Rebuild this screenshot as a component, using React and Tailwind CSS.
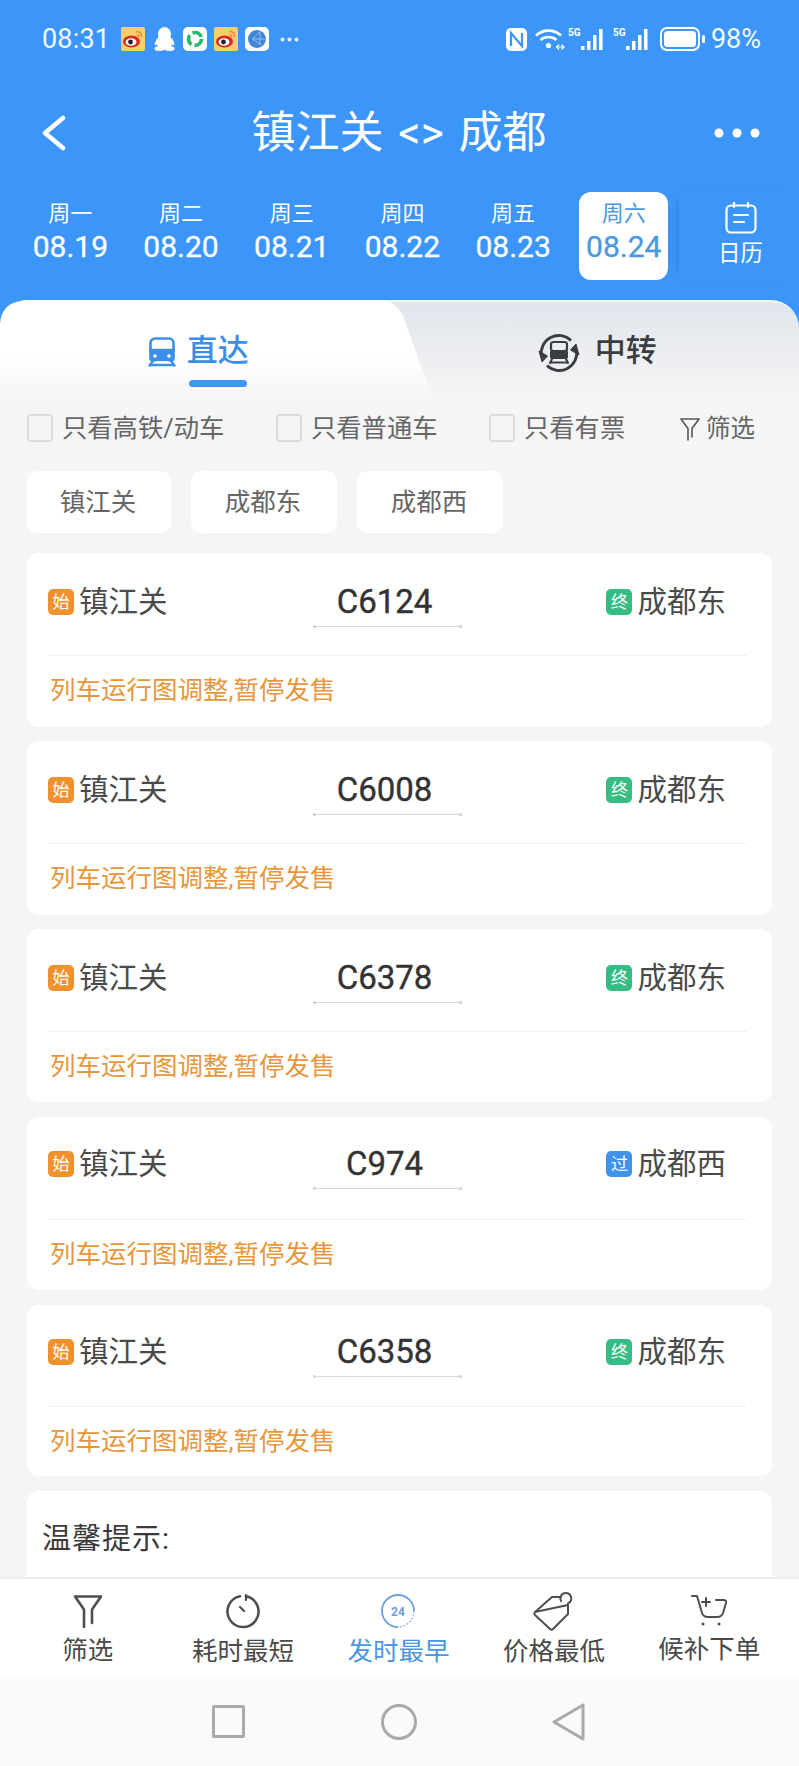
import React from 'react';

const days = [
  { week: '周一', date: '08.19' },
  { week: '周二', date: '08.20' },
  { week: '周三', date: '08.21' },
  { week: '周四', date: '08.22' },
  { week: '周五', date: '08.23' },
  { week: '周六', date: '08.24', active: true },
];

// card heights and gaps differ a little from row to row in the picture
const trains = [
  { no: 'C6124', to: '成都东', tag: '终', tagClass: 'bg-[#36bd85]', boxClass: 'h-[174px] mb-[14px]', rowClass: 'h-[103px] pt-[33px]' },
  { no: 'C6008', to: '成都东', tag: '终', tagClass: 'bg-[#36bd85]', boxClass: 'h-[174px] mb-[14px]', rowClass: 'h-[103px] pt-[33px]' },
  { no: 'C6378', to: '成都东', tag: '终', tagClass: 'bg-[#36bd85]', boxClass: 'h-[173px] mb-[15px]', rowClass: 'h-[103px] pt-[33px]' },
  { no: 'C974', to: '成都西', tag: '过', tagClass: 'bg-[#3f93e8]', boxClass: 'h-[173px] mb-[15px]', rowClass: 'h-[103px] pt-[31px]' },
  { no: 'C6358', to: '成都东', tag: '终', tagClass: 'bg-[#36bd85]', boxClass: 'h-[171px] mb-[15px]', rowClass: 'h-[102px] pt-[31px]' },
];

const WeiboIcon = () => (
  <svg width="24" height="24" viewBox="0 0 24 24">
    <rect width="24" height="24" rx="2" fill="#f6cf6c" />
    <ellipse cx="10.500" cy="14.500" rx="8.500" ry="6" fill="#d8281f" />
    <ellipse cx="10" cy="15" rx="5.500" ry="3.800" fill="#fff" />
    <circle cx="9.500" cy="15" r="2.400" fill="#222" />
    <path d="M15 5c3-1 6 1 5.500 5M15.500 8c1.500-.5 2.500.5 2.300 2" fill="none" stroke="#e8842a" strokeWidth="1.300" />
  </svg>
);

const StatusLeft = () => (
  <div className="flex items-center">
    <span className="text-[27px] leading-[32px] tracking-[0.2px] w-[79px]">08:31</span>
    <WeiboIcon />
    <svg className="ml-[9px]" width="21" height="24" viewBox="0 0 21 24" fill="#fff">
      <ellipse cx="10.500" cy="7.500" rx="6.500" ry="7.500" />
      <ellipse cx="10.500" cy="15" rx="8" ry="7.500" />
      <ellipse cx="5.500" cy="21.500" rx="5" ry="2.500" />
      <ellipse cx="15.500" cy="21.500" rx="5" ry="2.500" />
      <path d="M3 11 .5 17c0 1.500 1.500 1.500 3 0zM18 11l2.500 6c0 1.500-1.500 1.500-3 0z" />
    </svg>
    <svg className="ml-[8px]" width="24" height="24" viewBox="0 0 24 24">
      <rect width="24" height="24" rx="5" fill="#fff" />
      <circle cx="12" cy="12" r="6.500" fill="none" stroke="#25bb68" strokeWidth="3.600" strokeDasharray="10.500 3.100" />
    </svg>
    <div className="ml-[7px]"><WeiboIcon /></div>
    <svg className="ml-[7px]" width="24" height="24" viewBox="0 0 24 24">
      <rect width="24" height="24" rx="5" fill="#fff" />
      <circle cx="12" cy="12" r="9" fill="#3f86d8" />
      <path d="M15 4.500 7.500 12l9 6M7.500 12h13M15 4.500V18" fill="none" stroke="#a9cdf2" strokeWidth="0.800" />
    </svg>
    <svg className="ml-[11px]" width="19" height="5" viewBox="0 0 19 5" fill="#e4f0fe">
      <circle cx="2.500" cy="2.500" r="2" />
      <circle cx="9.500" cy="2.500" r="2" />
      <circle cx="16.500" cy="2.500" r="2" />
    </svg>
  </div>
);

const SignalIcon = () => (
  <svg width="38" height="24" viewBox="0 0 38 24" fill="#fff">
    <text x="0" y="9" fontSize="10" fontWeight="700" fontFamily="Roboto, sans-serif">5G</text>
    <rect x="13" y="19" width="3.500" height="4" />
    <rect x="19" y="14" width="3.500" height="9" />
    <rect x="25" y="8" width="3.500" height="15" />
    <rect x="31" y="2" width="3.500" height="21" />
  </svg>
);

const StatusRight = () => (
  <div className="flex items-center">
    <svg width="21" height="23" viewBox="0 0 21 23">
      <rect width="21" height="23" rx="5" fill="#fff" />
      <path d="M5 18V5l11 13V5" fill="none" stroke="#3c96fa" strokeWidth="2.200" />
    </svg>
    <svg className="ml-[8px]" width="30" height="24" viewBox="0 0 30 24" fill="none" stroke="#fff" strokeWidth="2.600">
      <path d="M1 8.500c7-6.500 18-6.500 25 0M5.500 13c4.500-4 11.500-4 16 0" />
      <circle cx="13.500" cy="18.500" r="2.600" fill="#fff" stroke="none" />
      <path d="M21 20h8M24 17.500 21.500 20l2.500 2.500M26.500 17.500 29 20l-2.500 2.500" strokeWidth="1.200" />
    </svg>
    <div className="ml-[3px]"><SignalIcon /></div>
    <div className="ml-[7px]"><SignalIcon /></div>
    <svg className="ml-[9px]" width="46" height="24" viewBox="0 0 46 24">
      <rect x="1" y="1" width="38" height="22" rx="6" fill="none" stroke="#fff" strokeWidth="2" />
      <rect x="4" y="4" width="32" height="16" rx="3.500" fill="#fff" />
      <rect x="42" y="8" width="3" height="8" rx="1.500" fill="#fff" />
    </svg>
    <span className="ml-[5px] text-[27px] leading-[32px]">98%</span>
  </div>
);

const CalendarIcon = () => (
  <svg width="32" height="32" viewBox="0 0 32 32" fill="none" stroke="#fff" strokeWidth="2.200" strokeLinecap="round">
    <rect x="1.500" y="3.500" width="29" height="27" rx="4.500" />
    <path d="M9 1v4M23 1v4M9 13h14M9 20h10" />
  </svg>
);

const TrainIcon = ({ color = '#3d8ee6' }) => (
  <svg width="28" height="30" viewBox="0 0 28 30">
    <path d="M7 1.500h14a4.500 4.500 0 0 1 4.500 4.500v7h-23V6A4.500 4.500 0 0 1 7 1.500z" fill="none" stroke={color} strokeWidth="2.600" />
    <path d="M1.200 12h25.600v9a3.500 3.500 0 0 1-3.500 3.500H4.700A3.500 3.500 0 0 1 1.200 21z" fill={color} />
    <circle cx="7" cy="19" r="1.800" fill="#fff" />
    <circle cx="21" cy="19" r="1.800" fill="#fff" />
    <path d="M5 24 1.500 28.500M23 24l3.500 4.500M2.500 28h23" stroke={color} strokeWidth="2.400" strokeLinecap="round" />
    <path d="M8 25h12" stroke="#fff" strokeWidth="1.500" />
  </svg>
);

const TransferIcon = () => (
  <svg width="42" height="42" viewBox="0 0 42 42" fill="none" stroke="#3a3d42">
    <path d="M3.500 24A17.500 17.500 0 0 1 33 8.500" strokeWidth="2.800" />
    <path d="M38.500 18A17.500 17.500 0 0 1 9 33.500" strokeWidth="2.800" />
    <path d="M1 19 4 30l5.500-6z" fill="#3a3d42" strokeWidth="1" />
    <path d="M41 23 38 12l-5.500 6z" fill="#3a3d42" strokeWidth="1" />
    <rect x="13" y="10" width="16" height="9" rx="2.500" strokeWidth="2.200" />
    <rect x="12" y="18" width="18" height="9" rx="2" fill="#3a3d42" strokeWidth="0" />
    <path d="M14 27l-2 4M28 27l2 4M12 30.500h18" strokeWidth="2" strokeLinecap="round" />
  </svg>
);

const FilterSmall = () => (
  <svg width="20" height="24" viewBox="0 0 20 24" fill="none" stroke="#555" strokeWidth="1.600" strokeLinejoin="round" strokeLinecap="round">
    <path d="M1 2h18l-7 9.500V20M8 23V11.500L1 2" />
  </svg>
);

const BarFilter = () => (
  <svg width="30" height="34" viewBox="0 0 30 34" fill="none" stroke="#4b4e52" strokeWidth="2.600" strokeLinejoin="round" strokeLinecap="round">
    <path d="M2 2.500h26L19 15.500V29M11 33V15.500L2 2.500" />
  </svg>
);

const BarClock = () => (
  <svg width="36" height="36" viewBox="0 0 36 36" fill="none" stroke="#4b4e52" strokeWidth="2.600" strokeLinecap="round">
    <path d="M15 3.300A15.500 15.500 0 1 0 21 3.300" />
    <path d="M21 2v5M15 14l4 4" strokeWidth="2.200" />
  </svg>
);

const BarEarliest = () => (
  <svg width="36" height="36" viewBox="0 0 36 36" fill="none">
    <path d="M18 2a16 16 0 0 1 16 16" stroke="#6f9ede" strokeWidth="1.800" />
    <path d="M34 18a16 16 0 0 1-16 16" stroke="#8fb2e4" strokeWidth="1.300" strokeDasharray="2 1.500" />
    <path d="M18 34A16 16 0 0 1 18 2" stroke="#6f9ede" strokeWidth="1.800" />
    <text x="18" y="22.500" textAnchor="middle" fontSize="12" fontWeight="700" fill="#6f9ede" fontFamily="Roboto, sans-serif">24</text>
  </svg>
);

const BarTag = () => (
  <svg width="42" height="40" viewBox="0 0 42 40" fill="none" stroke="#4b4e52" strokeWidth="2" strokeLinejoin="round" strokeLinecap="round">
    <path d="M2 21 19 6h9M35 14v9L20 38a2 2 0 0 1-3 0L2 24a2 2 0 0 1 0-3z" />
    <path d="M28 10a5.500 5.500 0 1 1 7 2.500" />
  </svg>
);

const BarCart = () => (
  <svg width="36" height="32" viewBox="0 0 36 32" fill="none" stroke="#4b4e52" strokeWidth="2" strokeLinecap="round" strokeLinejoin="round">
    <path d="M1 1h5l5 17c1 3 3 4 6 4h9c3 0 5-1 6-4l3-10c.5-2-.5-3-2.500-3H25" />
    <path d="M15 3v8M11 7h8" />
    <circle cx="12" cy="29" r="1.500" fill="#4b4e52" stroke="none" />
    <circle cx="28" cy="29" r="1.500" fill="#4b4e52" stroke="none" />
  </svg>
);

const barItems = [
  { label: '筛选', icon: <BarFilter />, labelClass: 'mt-[1px] text-[#4a4a4a]' },
  { label: '耗时最短', icon: <BarClock />, labelClass: 'mt-[2px] text-[#4a4a4a]' },
  { label: '发时最早', icon: <BarEarliest />, labelClass: 'mt-[2px] text-[#4a96e0]' },
  { label: '价格最低', icon: <BarTag />, labelClass: 'mt-[2px] text-[#4a4a4a]' },
  { label: '候补下单', icon: <BarCart />, labelClass: 'mt-[0px] text-[#4a4a4a]' },
];

const Checkbox = ({ label }) => (
  <div className="flex items-center gap-[9px]">
    <span className="w-[26px] h-[28px] rounded-[4px] border-2 border-[#dcdcdc] bg-[#f5f5f5]" />
    <span className="text-[25.300px] leading-[32px] text-[#666] mt-[1px]">{label}</span>
  </div>
);

const Tag = ({ text, className }) => (
  <span className={`w-[26px] h-[26px] rounded-[5px] flex items-center justify-center text-white text-[17px] leading-none ${className}`}>
    {text}
  </span>
);

const TrainCard = ({ train }) => (
  <div className={`bg-white rounded-[12px] mx-[27px] pl-[21px] pr-[25px] ${train.boxClass}`}>
    <div className={`grid grid-cols-[265px_149px_1fr] border-b border-[#f1f1f1] ${train.rowClass}`}>
      <div className="flex items-center gap-[5px] h-[32px]">
        <Tag text="始" className="bg-[#f0912f]" />
        <span className="text-[29.500px] leading-[32px] text-[#4a4a4a]">镇江关</span>
      </div>
      <div className="flex flex-col items-center">
        <span className="text-[33px] leading-[32px] text-[#333] pr-[6px] [-webkit-text-stroke:0.4px_#333]">{train.no}</span>
        <div className="relative w-full h-px mt-[8px] bg-[#d8d8d8]">
          <span className="absolute left-0 top-[-1px] w-[3px] h-[3px] rounded-full bg-[#d0d0d0]" />
          <span className="absolute right-0 top-[-1px] w-[3px] h-[3px] rounded-full bg-[#d0d0d0]" />
        </div>
      </div>
      <div className="flex items-center justify-end gap-[5px] h-[32px] pr-[21px]">
        <Tag text={train.tag} className={train.tagClass} />
        <span className="text-[29.500px] leading-[32px] text-[#4a4a4a]">{train.to}</span>
      </div>
    </div>
    <div className="h-[68px] flex items-center pl-[2px] text-[25.500px] leading-[32px] text-[#e8963c]">
      列车运行图调整,暂停发售
    </div>
  </div>
);

export default function App() {
  return (
    <div className="w-[799px] h-[1766px] overflow-hidden flex flex-col bg-[#f5f5f5] font-['Roboto','Noto_Sans_CJK_SC',sans-serif]">
      <div className="bg-[#3c96fa] text-white shrink-0 h-[300px]">
        {/* status bar */}
        <div className="h-[78px] pl-[42px] pr-[38px] flex items-center justify-between text-[#f2f8ff]">
          <StatusLeft />
          <StatusRight />
        </div>
        {/* title */}
        <div className="h-[106px] pl-[42px] pr-[39px] pt-[3px] grid grid-cols-[1fr_auto_1fr] items-center">
          <svg width="24" height="36" viewBox="0 0 24 36" fill="none" stroke="#fff" strokeWidth="4.500" strokeLinecap="round" strokeLinejoin="round">
            <path d="M21 3 3 18l18 15" />
          </svg>
          <span className="text-[44px] leading-[56px] [word-spacing:4px] mr-[4px]">镇江关 &lt;&gt; 成都</span>
          <svg className="justify-self-end" width="46" height="10" viewBox="0 0 46 10" fill="#fff">
            <circle cx="5" cy="5" r="4.500" />
            <circle cx="23" cy="5" r="4.500" />
            <circle cx="41" cy="5" r="4.500" />
          </svg>
        </div>
        {/* date strip */}
        <div className="flex pl-[15px] pt-[8px]">
          {days.map((d) => (
            <div key={d.date} className="w-[110.700px] h-[88px] flex justify-center">
              <div className={`w-[89px] h-[88px] rounded-[12px] flex flex-col items-center pt-[8px] ${d.active ? 'bg-white text-[#4a98e0]' : ''}`}>
                <span className="text-[22px] leading-[28px]">{d.week}</span>
                <span className="text-[30px] leading-[36px] mt-[1px] whitespace-nowrap [-webkit-text-stroke:0.3px_currentColor]">{d.date}</span>
              </div>
            </div>
          ))}
          <div className="flex-1 flex flex-col items-center pt-[10px] pl-[3px] shadow-[-8px_0_8px_-8px_rgba(30,90,170,0.5)]">
            <CalendarIcon />
            <span className="text-[22.500px] leading-[28px] mt-[5px]">日历</span>
          </div>
        </div>
      </div>

      {/* tabs */}
      <div className="bg-[#3c96fa] shrink-0">
        <div className="relative h-[100px] rounded-t-[28px] bg-linear-to-b from-[#e1e5ec] to-[#f5f5f5] border-t-2 border-[#f0f6fe]">
          <div className="absolute left-0 right-0 top-[-2px] h-[102px] bg-linear-to-b from-white via-white via-[55%] to-[#f5f5f5] [clip-path:path('M0_102L0_26Q0_0_30_0L378_0Q395_0_403_16L434_102Z')]" />
          <div className="relative grid grid-cols-2 h-full">
            <div className="flex items-start justify-center pt-[35px] gap-[11px] ml-[-3px]">
              <TrainIcon />
              <div className="flex flex-col items-center mt-[-4px]">
                <span className="text-[31px] leading-[36px] font-medium text-[#3d8ee6]">直达</span>
                <span className="w-[58px] h-[7px] rounded-full bg-[#3c96fa] mt-[11px]" />
              </div>
            </div>
            <div className="flex items-start justify-center pt-[30px] gap-[15px] pr-[4px]">
              <TransferIcon />
              <span className="text-[31px] leading-[36px] font-medium text-[#3a3d42] mt-[1px]">中转</span>
            </div>
          </div>
        </div>
      </div>

      {/* list */}
      <div className="flex-1 min-h-0 overflow-hidden">
        <div className="h-[56px] pl-[27px] grid grid-cols-[249px_213px_191px_1fr] items-center">
          <Checkbox label="只看高铁/动车" />
          <Checkbox label="只看普通车" />
          <Checkbox label="只看有票" />
          <div className="flex items-center gap-[6px] text-[24.500px] leading-[32px] text-[#666] mt-[1px]">
            <FilterSmall />
            筛选
          </div>
        </div>
        <div className="flex gap-[20px] pl-[27px] mt-[15px] mb-[20px]">
          {['镇江关', '成都东', '成都西'].map((s) => (
            <div key={s} className="w-[146px] h-[62px] bg-white rounded-[10px] flex items-center justify-center text-[25.500px] text-[#666] pr-[2px] first:w-[144px]">
              {s}
            </div>
          ))}
        </div>
        {trains.map((t) => (
          <TrainCard key={t.no} train={t} />
        ))}
        <div className="bg-white rounded-t-[12px] mx-[27px] h-[86px] pl-[15px] pt-[30px] text-[29px] leading-[36px] tracking-[1px] text-[#3a3a3a]">
          温馨提示:
        </div>
      </div>

      {/* bottom actions */}
      <div className="shrink-0 h-[100px] bg-white border-t-2 border-[#ececec] grid grid-cols-5 pl-[10px] pr-[12px]">
        {barItems.map((item) => (
          <div key={item.label} className="flex flex-col items-center pt-[10px]">
            <div className="h-[42px] flex items-center justify-center pt-[1px]">{item.icon}</div>
            <span className={`text-[25.500px] leading-[36px] ${item.labelClass}`}>{item.label}</span>
          </div>
        ))}
      </div>

      {/* system nav */}
      <div className="shrink-0 h-[89px] bg-[#fafafa] flex items-center justify-center">
        <div className="w-[170px] flex justify-center pr-[2px]">
          <span className="w-[33px] h-[33px] rounded-[2px] border-[3px] border-[#aaa]" />
        </div>
        <div className="w-[170px] flex justify-center pr-[2px]">
          <span className="w-[36px] h-[36px] rounded-full border-[3px] border-[#aaa]" />
        </div>
        <div className="w-[170px] flex justify-center pr-[2px]">
          <svg width="33" height="38" viewBox="0 0 33 38" fill="none" stroke="#aaa" strokeWidth="3" strokeLinejoin="round">
            <path d="M31 2v34L2 19z" />
          </svg>
        </div>
      </div>
    </div>
  );
}
